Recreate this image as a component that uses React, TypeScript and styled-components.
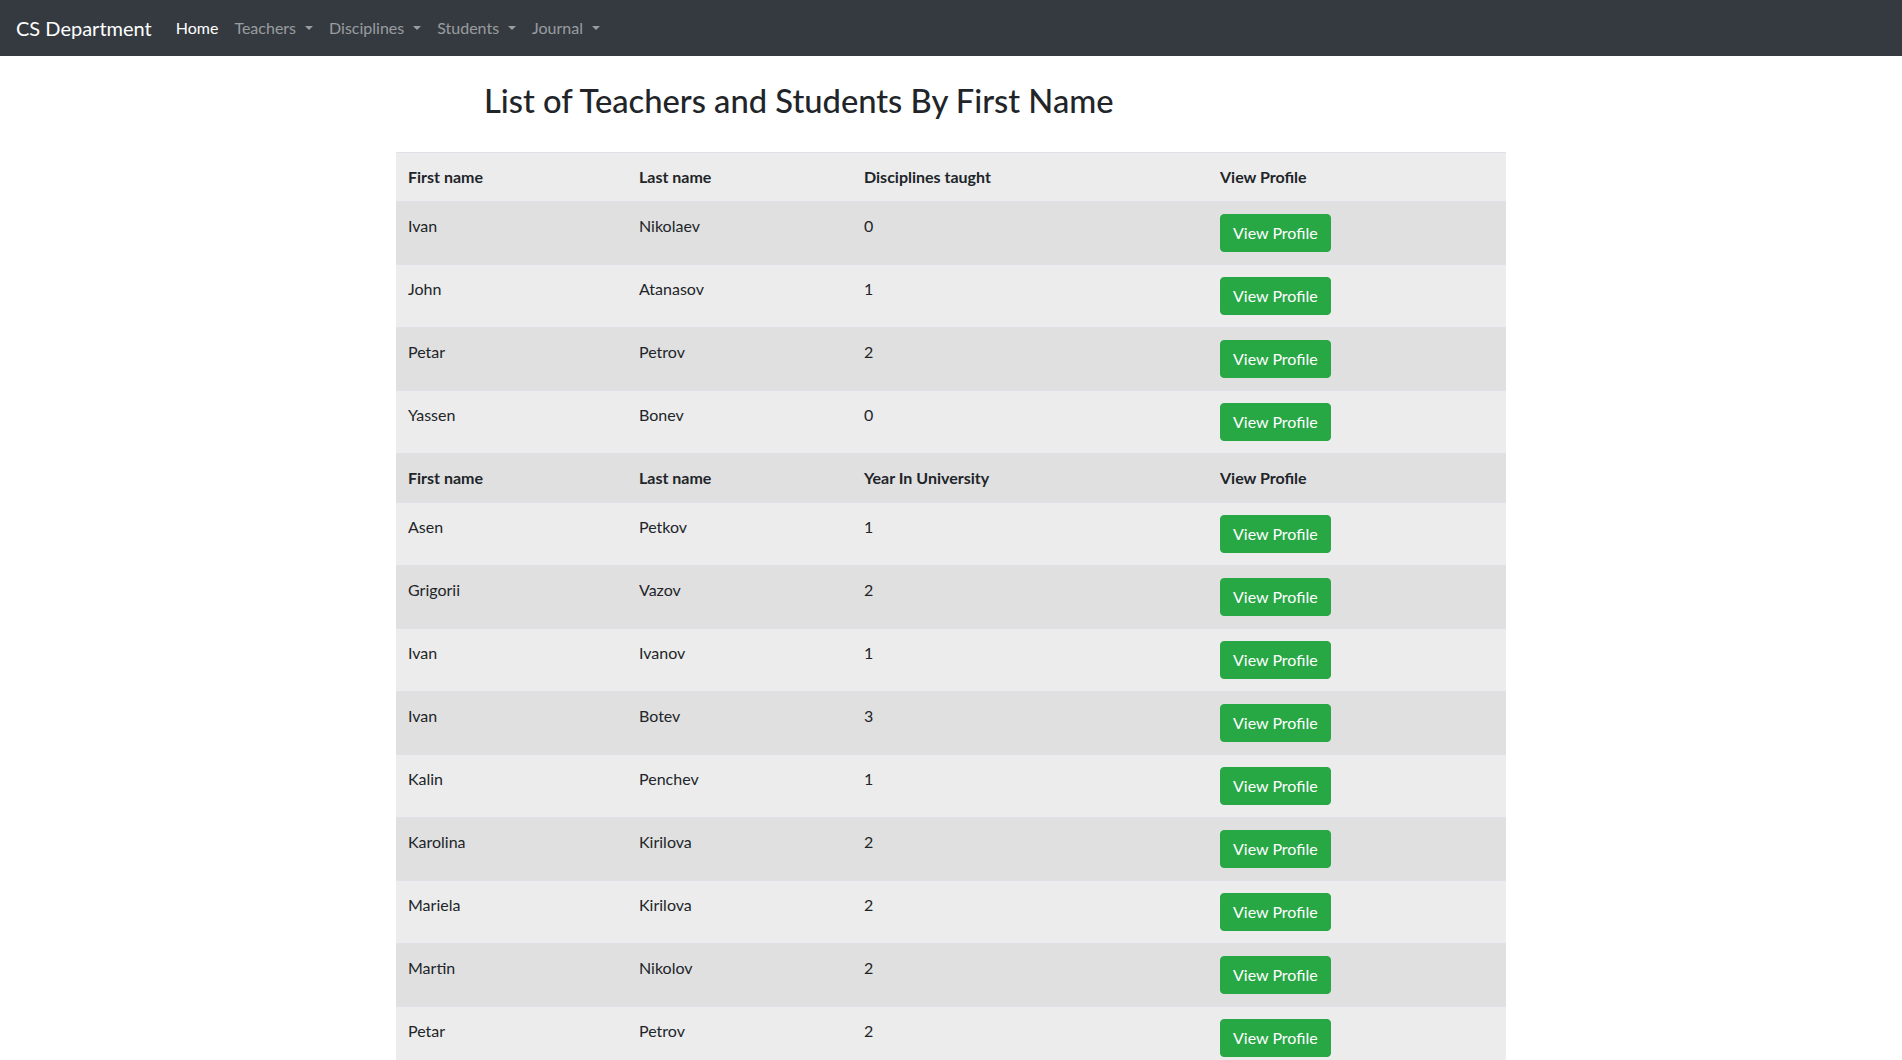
import styled, { createGlobalStyle } from 'styled-components';

interface Person {
  firstName: string;
  lastName: string;
  count: number;
}

const teachers: Person[] = [
  { firstName: 'Ivan', lastName: 'Nikolaev', count: 0 },
  { firstName: 'John', lastName: 'Atanasov', count: 1 },
  { firstName: 'Petar', lastName: 'Petrov', count: 2 },
  { firstName: 'Yassen', lastName: 'Bonev', count: 0 },
];

const students: Person[] = [
  { firstName: 'Asen', lastName: 'Petkov', count: 1 },
  { firstName: 'Grigorii', lastName: 'Vazov', count: 2 },
  { firstName: 'Ivan', lastName: 'Ivanov', count: 1 },
  { firstName: 'Ivan', lastName: 'Botev', count: 3 },
  { firstName: 'Kalin', lastName: 'Penchev', count: 1 },
  { firstName: 'Karolina', lastName: 'Kirilova', count: 2 },
  { firstName: 'Mariela', lastName: 'Kirilova', count: 2 },
  { firstName: 'Martin', lastName: 'Nikolov', count: 2 },
  { firstName: 'Petar', lastName: 'Petrov', count: 2 },
];

const GlobalStyle = createGlobalStyle`
  body {
    margin: 0;
    font-family: "Segoe UI", Lato, "Noto Sans", sans-serif;
    font-size: 16px;
    line-height: 1.5;
    color: #212529;
    background: #fff;
  }
`;

const Navbar = styled.nav`
  display: flex;
  align-items: center;
  padding: 8px 16px;
  background: #343a40;
`;

const Brand = styled.a`
  padding: 5px 0;
  margin-right: 16px;
  font-size: 20px;
  line-height: 30px;
  color: #fff;
  text-decoration: none;
`;

const NavList = styled.ul`
  display: flex;
  margin: 0;
  padding: 0;
  list-style: none;
`;

const NavLink = styled.a<{ $active?: boolean; $dropdown?: boolean }>`
  display: block;
  padding: 8px;
  color: ${(p) => (p.$active ? '#fff' : 'rgba(255, 255, 255, 0.5)')};
  text-decoration: none;
  &::after {
    display: ${(p) => (p.$dropdown ? 'inline-block' : 'none')};
    content: '';
    margin-left: 9px;
    vertical-align: 0.255em;
    border-top: 0.3em solid;
    border-right: 0.3em solid transparent;
    border-left: 0.3em solid transparent;
  }
`;

const Container = styled.main`
  max-width: 1110px;
  margin: 0 auto;
  padding: 0 15px;
`;

const Title = styled.h2`
  margin: 25px 0 32px 88px;
  font-size: 32.7px;
  font-weight: 500;
  line-height: 1.2;
`;

const Table = styled.table`
  width: 100%;
  border-collapse: collapse;
  background: #ececec;
`;

const HeadCell = styled.th`
  padding: 12px;
  text-align: left;
  font-weight: 700;
  vertical-align: bottom;
  border-top: 1px solid #dee2e6;
`;

const Row = styled.tr`
  &:nth-of-type(odd) {
    background: rgba(0, 0, 0, 0.05);
  }
`;

const Cell = styled.td`
  padding: 12px;
  vertical-align: top;
  border-top: 1px solid #dee2e6;
`;

const SubHeadCell = styled(Cell)`
  font-weight: 700;
`;

const ProfileButton = styled.button`
  padding: 6px 12px;
  font-family: inherit;
  font-size: 16px;
  line-height: 1.5;
  color: #fff;
  background: #28a745;
  border: 1px solid #28a745;
  border-radius: 4px;
  cursor: pointer;
`;

const PersonRow = ({ person }: { person: Person }) => (
  <Row>
    <Cell>{person.firstName}</Cell>
    <Cell>{person.lastName}</Cell>
    <Cell>{person.count}</Cell>
    <Cell>
      <ProfileButton>View Profile</ProfileButton>
    </Cell>
  </Row>
);

export default function App() {
  return (
    <>
      <GlobalStyle />
      <Navbar>
        <Brand href='#'>CS Department</Brand>
        <NavList>
          <li><NavLink href='#' $active>Home</NavLink></li>
          <li><NavLink href='#' $dropdown>Teachers</NavLink></li>
          <li><NavLink href='#' $dropdown>Disciplines</NavLink></li>
          <li><NavLink href='#' $dropdown>Students</NavLink></li>
          <li><NavLink href='#' $dropdown>Journal</NavLink></li>
        </NavList>
      </Navbar>
      <Container>
        <Title>List of Teachers and Students By First Name</Title>
        <Table>
          <colgroup>
            <col style={{ width: 231 }} />
            <col style={{ width: 225 }} />
            <col style={{ width: 356 }} />
            <col style={{ width: 298 }} />
          </colgroup>
          <thead>
            <tr>
              <HeadCell>First name</HeadCell>
              <HeadCell>Last name</HeadCell>
              <HeadCell>Disciplines taught</HeadCell>
              <HeadCell>View Profile</HeadCell>
            </tr>
          </thead>
          <tbody>
            {teachers.map((t, i) => <PersonRow key={`t${i}`} person={t} />)}
            <Row>
              <SubHeadCell>First name</SubHeadCell>
              <SubHeadCell>Last name</SubHeadCell>
              <SubHeadCell>Year In University</SubHeadCell>
              <SubHeadCell>View Profile</SubHeadCell>
            </Row>
            {students.map((s, i) => <PersonRow key={`s${i}`} person={s} />)}
          </tbody>
        </Table>
      </Container>
    </>
  );
}
